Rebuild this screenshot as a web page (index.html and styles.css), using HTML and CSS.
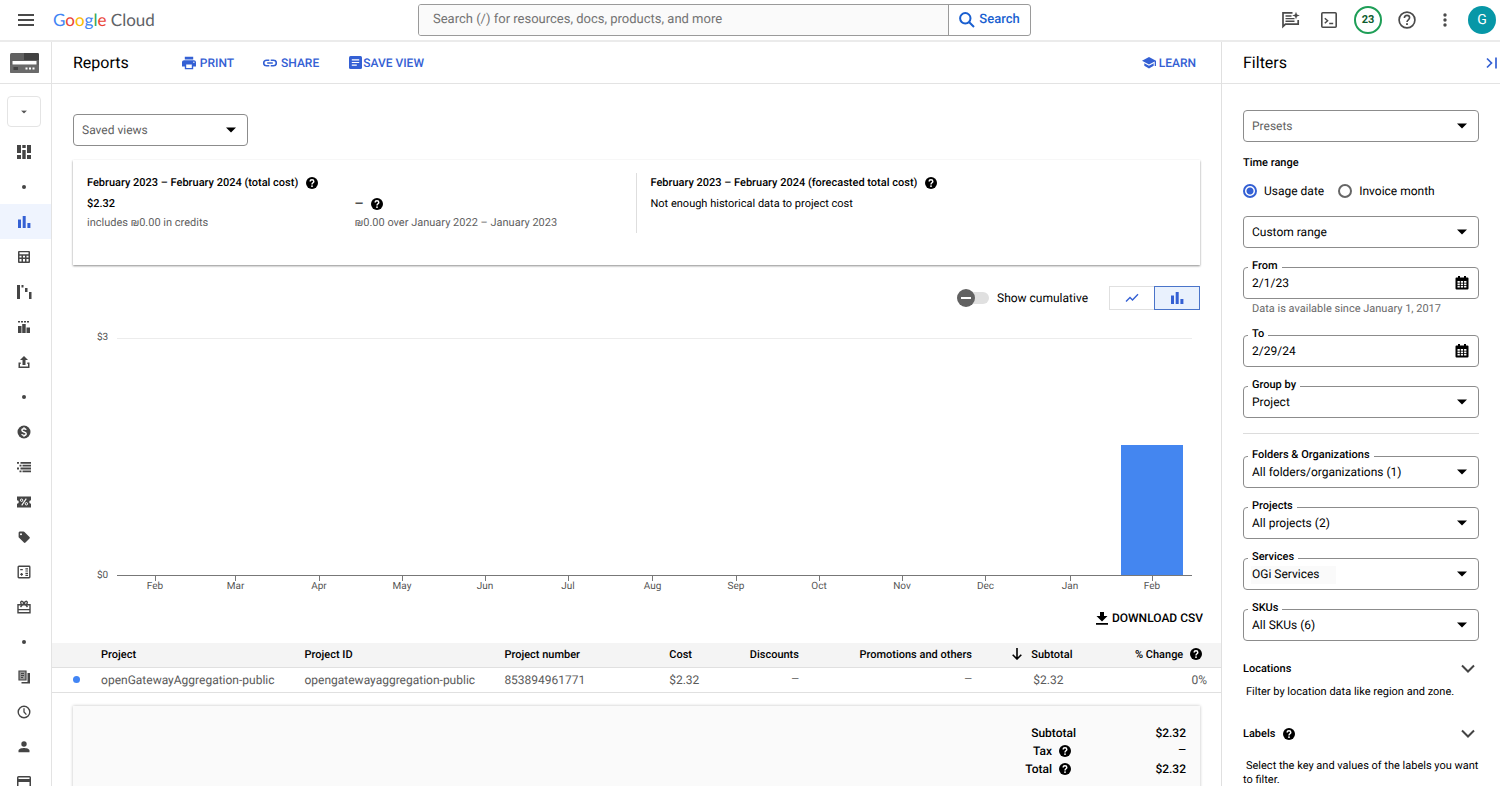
FILE: index.html
```html
<!DOCTYPE html>
<html lang="en">
<head>
<meta charset="utf-8">
<meta name="viewport" content="width=device-width, initial-scale=1">
<title>Reports – Google Cloud</title>
<link rel="stylesheet" href="styles.css">
</head>
<body>
<svg class="sprite" aria-hidden="true">
  <symbol id="i-help" viewBox="2 2 20 20"><circle cx="12" cy="12" r="10"/><path class="knock" stroke-width="2.4" d="M9 9.5c0-1.9 1.3-2.9 3-2.9s3 1.100 3 2.700c0 2.200-3 2.300-3 5"/><rect class="knock-fill" x="10.700" y="16" width="2.600" height="2.600"/></symbol>
  <symbol id="i-caret" viewBox="0 0 10 6"><path d="M0 .5h10l-5 5z"/></symbol>
  <symbol id="i-chevron" viewBox="0 0 14 10"><path class="line" stroke-width="2" d="M1 1.500l6 6 6-6"/></symbol>
  <symbol id="i-bars" viewBox="0 0 14 14"><path d="M1 4.500h3V13H1zM5.700 1h3v12h-3zM10.400 8h3v5h-3z"/></symbol>
  <symbol id="i-calendar" viewBox="0 0 14 14"><path d="M3 0h2v1.500h4V0h2v1.500h1.500a1 1 0 0 1 1 1V12.500a1 1 0 0 1-1 1h-11a1 1 0 0 1-1-1v-10a1 1 0 0 1 1-1H3z"/><path class="knock-fill" d="M2.500 5h2.300v1.700H2.500zM5.800 5h2.300v1.700H5.800zM9.100 5h2.300v1.700H9.100zM2.500 7.500h2.300v1.700H2.500zM5.800 7.500h2.300v1.700H5.800zM9.100 7.500h2.300v1.700H9.100zM2.500 10h2.300v1.400H2.500zM5.800 10h2.300v1.400H5.800zM9.100 10h2.300v1.400H9.100z"/></symbol>
</svg>

<header class="topbar">
  <div class="brand">
    <button class="icon-btn" aria-label="Main menu"><svg width="16" height="12" viewBox="0 0 16 12"><path d="M0 0h16v2H0zM0 5h16v2H0zM0 10h16v2H0z"/></svg></button>
    <a class="logo" href="#" aria-label="Google Cloud"><span class="g-blue">G</span><span class="g-red">o</span><span class="g-yellow">o</span><span class="g-blue">g</span><span class="g-green">l</span><span class="g-red">e</span> <span class="cloud">Cloud</span></a>
  </div>
  <form class="search">
    <input class="search-input" type="search" aria-label="Search" placeholder="Search (/) for resources, docs, products, and more">
    <button class="search-btn" type="button"><svg width="16" height="16" viewBox="0 0 16 16"><path class="line" stroke-width="2" d="M10.500 10.500l4.500 4.500M11.500 6.300a5.200 5.200 0 1 1-10.400 0 5.200 5.200 0 0 1 10.400 0z"/></svg>Search</button>
  </form>
  <div class="top-actions">
    <button class="icon-btn" aria-label="Gemini chat"><svg width="20" height="18" viewBox="0 0 20 18"><path class="line" stroke-width="1.700" d="M11.500 1.900H2V15.500L4.500 13.200H17.200V9"/><path class="line" stroke-width="1.400" d="M4.500 5h6M4.500 7.600h9M4.500 10.200h9"/><path d="M15 .8l1 2.700 2.800 1-2.800 1-1 2.800-1-2.800-2.800-1 2.800-1z"/></svg></button>
    <button class="icon-btn" aria-label="Cloud Shell"><svg width="16" height="16" viewBox="0 0 16 16"><rect class="line" stroke-width="1.600" x=".8" y=".8" width="14.400" height="14.400" rx="1"/><path class="line" stroke-width="1.500" d="M3.800 6.200l2.800 2.500-2.800 2.500M8.200 11.400h4"/></svg></button>
    <button class="count" aria-label="23 notifications">23</button>
    <button class="icon-btn" aria-label="Help"><svg width="18" height="18" viewBox="0 0 18 18"><circle class="line" stroke-width="1.700" cx="9" cy="9" r="7.900"/><path class="line" stroke-width="1.600" d="M6.400 7.100c0-1.700 1.200-2.700 2.600-2.700s2.600 1 2.600 2.400c0 1.900-2.600 2.100-2.600 4.200"/><rect x="8.100" y="12.200" width="1.800" height="1.800"/></svg></button>
    <button class="icon-btn more" aria-label="More options"><svg width="4" height="14" viewBox="0 0 4 14"><circle cx="2" cy="2" r="1.700"/><circle cx="2" cy="7" r="1.700"/><circle cx="2" cy="12" r="1.700"/></svg></button>
    <button class="avatar" aria-label="Account">G</button>
  </div>
</header>

<div class="shell">
  <nav class="rail" aria-label="Billing">
    <div class="rail-head"><svg width="29" height="20" viewBox="0 0 29 20"><rect fill="#616161" width="29" height="20" rx="1.500"/><path fill="#424242" d="M14 0h13.500A1.500 1.500 0 0 1 29 1.500V7H14z"/><path fill="#6a6a6a" d="M0 12h29v6.500a1.500 1.500 0 0 1-1.500 1.500h-26A1.500 1.500 0 0 1 0 18.500z"/><path fill="#fff" d="M2.500 8h24v3.500h-24z"/><path fill="#424242" d="M3.500 14h4.500v3H3.500z"/><path fill="#fff" d="M15.500 14.500h2v2h-2zM19 14.500h2v2h-2zM22.500 14.500h2v2h-2z"/></svg></div>
    <button class="rail-picker" aria-label="Billing account"><svg width="6" height="4" viewBox="0 0 10 6"><use href="#i-caret"/></svg></button>
    <ul class="rail-list">
      <li><a href="#" aria-label="Overview"><svg width="14" height="14" viewBox="0 0 14 14"><path d="M0 0h4v8H0zM0 10h4v4H0zM5.300 0h3.400v3H5.300zM5.300 5h3.400v9H5.300zM10 0h4v8h-4zM10 10h4v4h-4z"/></svg></a></li>
      <li class="rail-dot"></li>
      <li><a class="active" href="#" aria-label="Reports"><svg width="14" height="14"><use href="#i-bars"/></svg></a></li>
      <li><a href="#" aria-label="Cost table"><svg width="14" height="14" viewBox="0 0 14 14"><path fill-rule="evenodd" d="M2 1h10a1 1 0 0 1 1 1v10a1 1 0 0 1-1 1H2a1 1 0 0 1-1-1V2a1 1 0 0 1 1-1zM2.500 2.300v2h9v-2zM2.500 5.700v1.800h2V5.700zM6 5.700v1.800h2V5.700zM9.500 5.700v1.800h2V5.700zM2.500 9v2.500h2V9zM6 9v2.500h2V9zM9.500 9v2.500h2V9z"/></svg></a></li>
      <li><a href="#" aria-label="Cost breakdown"><svg width="16" height="14" viewBox="0 0 16 14"><path d="M1 0h3v14H1zM5.500 0h2v2.500h-2zM9 3h2.500v4H9zM13 7h2.500v7H13z"/></svg></a></li>
      <li><a href="#" aria-label="Commitments"><svg width="14" height="14" viewBox="0 0 14 14"><path d="M1 1h2v1.500H1zM4 1h2v1.500H4zM7 1h2v1.500H7zM10 1h2v1.500h-2zM1 6h3.500v7H1zM5.200 4h3.500v9H5.200zM9.500 7.500H13V13H9.500z"/></svg></a></li>
      <li><a href="#" aria-label="Billing export"><svg width="14" height="14" viewBox="0 0 14 14"><path d="M7 1l4 4H8.500v5h-3V5H3zM1.500 7.500h2.200V9H3v2.500h8V9h-.7V7.500h2.200V13h-11z"/></svg></a></li>
      <li class="rail-dot"></li>
      <li><a href="#" aria-label="Anomalies"><svg width="14" height="14" viewBox="0 0 14 14"><circle cx="7" cy="7" r="6.500"/><path class="knock" stroke-width="1.400" d="M9.200 4.800C8.800 4 8 3.700 7 3.700c-1.200 0-2.100.6-2.100 1.600C4.900 7.700 9.200 6.400 9.200 8.800c0 1-.9 1.600-2.200 1.600-1.100 0-2-.4-2.300-1.300M7 2.300v1.400M7 10.400v1.300"/></svg></a></li>
      <li><a href="#" aria-label="Budgets"><svg width="14" height="12" viewBox="0 0 14 12"><path d="M0 1h2v1.800H0zM3.500 1H14v1.800H3.500zM2.500 3.800h2v1.800h-2zM5.500 3.800H14v1.800H5.500zM0 6.600h2v1.800H0zM3.500 6.600H14v1.800H3.500zM2.500 9.400h2v1.800h-2zM5.500 9.400H14v1.800H5.500z"/></svg></a></li>
      <li><a href="#" aria-label="Credits"><svg width="14" height="12" viewBox="0 0 14 12"><path d="M0 .5h14v3.700a1.800 1.800 0 0 0 0 3.600v3.700H0V7.800a1.800 1.800 0 0 0 0-3.600z"/><path class="knock" stroke-width="1.100" d="M9.300 2.600L4.700 9.400"/><circle class="knock" stroke-width="1" cx="4.600" cy="4.200" r="1.200"/><circle class="knock" stroke-width="1" cx="9.400" cy="7.800" r="1.200"/></svg></a></li>
      <li><a href="#" aria-label="Pricing"><svg width="14" height="14" viewBox="0 0 14 14"><path fill-rule="evenodd" d="M2.500 1.500h4l1 .4 5 5q.8.800 0 1.600l-4 4q-.8.800-1.600 0L1.600 7.200V2.500zM4 3.200a1 1 0 1 0 0 2 1 1 0 0 0 0-2z"/></svg></a></li>
      <li><a href="#" aria-label="Cost estimation"><svg width="14" height="14" viewBox="0 0 14 14"><rect class="line" stroke-width="1.400" x="1.200" y="1.200" width="11.600" height="11.600" rx=".7"/><path class="line" stroke-width="1.200" d="M3.200 4.600h2.600M8.400 3.900h2.600M8.400 6h2.600M3.200 9.400h2.800M4.600 8v2.800M8.400 8.400h2.600M8.400 10.400h2.600"/></svg></a></li>
      <li><a href="#" aria-label="Rewards"><svg width="14" height="14" viewBox="0 0 14 14"><path class="line" stroke-width="1.400" d="M1 4.700h12v8H1zM1 9.600h12M3.500 7l3.500-4 3.500 4M7 3.800C6.500 1 3.700.5 3.700 2.500c0 1.300.8 2 1.500 2.100M7 3.800c.5-2.800 3.300-3.300 3.300-1.300 0 1.300-.8 2-1.500 2.100"/></svg></a></li>
      <li class="rail-dot"></li>
      <li><a href="#" aria-label="Documents"><svg width="14" height="14" viewBox="0 0 14 14"><path fill="#9a9a9a" d="M2 1h7v9H2z"/><path class="line" stroke-width="1.200" d="M2 1h7v9H2zM4 3.500h3M4 5.500h3M4 7.500h2"/><path d="M10.500 3H13v10.500H4.500V12h6z"/></svg></a></li>
      <li><a href="#" aria-label="Transactions"><svg width="14" height="14" viewBox="0 0 14 14"><circle class="line" stroke-width="1.400" cx="7" cy="7" r="5.800"/><path class="line" stroke-width="1.300" d="M7 3.300V7l2.400 2.600"/></svg></a></li>
      <li><a href="#" aria-label="Account management"><svg width="14" height="14" viewBox="0 0 14 14"><circle cx="7" cy="4" r="2.700"/><path d="M1.500 12.300v-1.500C1.500 8.700 5 8 7 8s5.500.7 5.500 2.800v1.500z"/></svg></a></li>
      <li><a href="#" aria-label="Payment method"><svg width="14" height="12" viewBox="0 0 14 12"><path fill-rule="evenodd" d="M1.500 0h11Q14 0 14 1.500v9q0 1.500-1.500 1.500h-11Q0 12 0 10.500v-9Q0 0 1.500 0zM1.500 1.500V3h11V1.500zM1.500 6v4.500h11V6z"/></svg></a></li>
    </ul>
  </nav>

  <main class="main">
    <div class="toolbar">
      <h1 class="title">Reports</h1>
      <button class="tool tool-print"><svg width="14" height="14" viewBox="2 2 20 20"><path d="M19 8H5c-1.660 0-3 1.340-3 3v6h4v4h12v-4h4v-6c0-1.660-1.340-3-3-3zm-3 11H8v-5h8v5zm3-7c-.55 0-1-.45-1-1s.45-1 1-1 1 .45 1 1-.45 1-1 1zm-1-9H6v4h12V3z"/></svg>PRINT</button>
      <button class="tool tool-share"><svg width="14" height="8" viewBox="2 6.500 20 11"><path class="line" stroke-width="2.300" d="M11 8H7a4 4 0 0 0 0 8h4M13 8h4a4 4 0 0 1 0 8h-4M8 12h8"/></svg>SHARE</button>
      <button class="tool tool-save"><svg width="13" height="13" viewBox="0 0 13 13"><rect width="13" height="13" rx="1.500"/><path class="knock" stroke-width="1.200" d="M2.800 3.800h7.400M2.800 6.500h7.400M2.800 9.200h5"/></svg>SAVE VIEW</button>
      <button class="tool tool-learn"><svg width="14" height="12" viewBox="0 0 14 12"><path d="M7 0l7 3.700V9h-1.300V4.500L7 7.500 0 3.700zM2.300 6.200L7 8.800l4.700-2.600v2.600L7 11.500 2.300 8.800z"/></svg>LEARN</button>
    </div>

    <div class="content">
      <div class="field saved-views">
        <select class="control muted" aria-label="Saved views"><option>Saved views</option></select>
        <svg class="field-icon" width="10" height="6"><use href="#i-caret"/></svg>
      </div>

      <section class="summary">
        <div class="summary-cost">
          <h2 class="summary-title">February 2023 – February 2024 (total cost) <svg width="12" height="12"><use href="#i-help"/></svg></h2>
          <div class="summary-cols">
            <div><p class="summary-value">$2.32</p><p class="summary-note">includes ₪0.00 in credits</p></div>
            <div><p class="summary-value">— <svg width="12" height="12"><use href="#i-help"/></svg></p><p class="summary-note">₪0.00 over January 2022 – January 2023</p></div>
          </div>
        </div>
        <div class="summary-forecast">
          <h2 class="summary-title">February 2023 – February 2024 (forecasted total cost) <svg width="12" height="12"><use href="#i-help"/></svg></h2>
          <p class="summary-text">Not enough historical data to project cost</p>
        </div>
      </section>

      <div class="chart-controls">
        <label class="switch"><input class="switch-input" type="checkbox" role="switch">Show cumulative</label>
        <div class="chart-type">
          <button class="type-btn" aria-label="Line chart"><svg width="14" height="10" viewBox="0 0 14 10"><path class="line" stroke-width="1.400" d="M1 8.500l4-4 2.500 2.500L13 1.200"/></svg></button>
          <button class="type-btn selected" aria-label="Bar chart"><svg width="14" height="14"><use href="#i-bars"/></svg></button>
        </div>
      </div>

      <div class="chart" role="img" aria-label="Cost by month">
        <div class="y-axis"><span>$3</span><span>$0</span></div>
        <div class="plot">
          <div class="month"><div class="slot"></div><span>Feb</span></div>
          <div class="month"><div class="slot"></div><span>Mar</span></div>
          <div class="month"><div class="slot"></div><span>Apr</span></div>
          <div class="month"><div class="slot"></div><span>May</span></div>
          <div class="month"><div class="slot"></div><span>Jun</span></div>
          <div class="month"><div class="slot"></div><span>Jul</span></div>
          <div class="month"><div class="slot"></div><span>Aug</span></div>
          <div class="month"><div class="slot"></div><span>Sep</span></div>
          <div class="month"><div class="slot"></div><span>Oct</span></div>
          <div class="month"><div class="slot"></div><span>Nov</span></div>
          <div class="month"><div class="slot"></div><span>Dec</span></div>
          <div class="month"><div class="slot"></div><span>Jan</span></div>
          <div class="month"><div class="slot"><div class="bar" style="height:55%"></div></div><span>Feb</span></div>
        </div>
      </div>
    </div>

    <div class="download-row"><button class="download"><svg width="12" height="13" viewBox="0 0 12 13"><path d="M4 0h4v4h3.500L6 9.500.5 4H4zM0 11h12v1.800H0z"/></svg>DOWNLOAD CSV</button></div>

    <table class="costs">
      <colgroup><col class="c-dot"><col class="c-project"><col class="c-id"><col class="c-number"><col class="c-cost"><col class="c-discount"><col class="c-promo"><col class="c-subtotal"><col class="c-change"></colgroup>
      <thead><tr><td></td><th>Project</th><th>Project ID</th><th>Project number</th><th>Cost</th><th class="num">Discounts</th><th class="num">Promotions and others</th><th class="num"><svg class="sort" width="10" height="12" viewBox="0 0 10 12"><path class="line" stroke-width="1.600" d="M5 0v11M.7 6.700L5 11l4.300-4.300"/></svg>Subtotal</th><th class="num change">% Change <svg width="12" height="12"><use href="#i-help"/></svg></th></tr></thead>
      <tbody><tr><td class="dot-cell"><span class="dot"></span></td><td>openGatewayAggregation-public</td><td>opengatewayaggregation-public</td><td>853894961771</td><td>$2.32</td><td class="num dash">—</td><td class="num dash">—</td><td class="num sub">$2.32</td><td class="num change">0%</td></tr></tbody>
    </table>

    <dl class="totals">
      <dt class="plain">Subtotal</dt><dd>$2.32</dd>
      <dt>Tax <svg width="12" height="12"><use href="#i-help"/></svg></dt><dd class="dash">—</dd>
      <dt>Total <svg width="12" height="12"><use href="#i-help"/></svg></dt><dd>$2.32</dd>
    </dl>
  </main>

  <aside class="filters">
    <div class="filters-head"><h2 class="title">Filters</h2><button class="collapse" aria-label="Hide filters"><svg width="11" height="12" viewBox="0 0 11 12"><path class="line" stroke-width="1.700" d="M1 1.500L5.500 6 1 10.500M10 .5v11"/></svg></button></div>
    <div class="filters-body">
      <div class="field"><select class="control muted" aria-label="Presets"><option>Presets</option></select><svg class="field-icon" width="10" height="6"><use href="#i-caret"/></svg></div>
      <fieldset class="range">
        <legend class="heading">Time range</legend>
        <div class="radios">
          <label class="radio"><input type="radio" name="range" checked>Usage date</label>
          <label class="radio"><input type="radio" name="range">Invoice month</label>
        </div>
      </fieldset>
      <div class="field"><select class="control" aria-label="Range"><option>Custom range</option></select><svg class="field-icon" width="10" height="6"><use href="#i-caret"/></svg></div>
      <div class="field"><label class="field-label" for="from">From</label><input class="control" id="from" type="text" value="2/1/23"><svg class="field-icon" width="14" height="14"><use href="#i-calendar"/></svg></div>
      <p class="hint">Data is available since January 1, 2017</p>
      <div class="field"><label class="field-label" for="to">To</label><input class="control" id="to" type="text" value="2/29/24"><svg class="field-icon" width="14" height="14"><use href="#i-calendar"/></svg></div>
      <div class="field"><label class="field-label" for="group">Group by</label><select class="control" id="group"><option>Project</option></select><svg class="field-icon" width="10" height="6"><use href="#i-caret"/></svg></div>
      <hr class="rule">
      <div class="field"><label class="field-label" for="folders">Folders &amp; Organizations</label><select class="control" id="folders"><option>All folders/organizations (1)</option></select><svg class="field-icon" width="10" height="6"><use href="#i-caret"/></svg></div>
      <div class="field"><label class="field-label" for="projects">Projects</label><select class="control" id="projects"><option>All projects (2)</option></select><svg class="field-icon" width="10" height="6"><use href="#i-caret"/></svg></div>
      <div class="field"><label class="field-label" for="services">Services</label><select class="control tinted" id="services"><option>OGi Services</option></select><svg class="field-icon" width="10" height="6"><use href="#i-caret"/></svg></div>
      <div class="field"><label class="field-label" for="skus">SKUs</label><select class="control" id="skus"><option>All SKUs (6)</option></select><svg class="field-icon" width="10" height="6"><use href="#i-caret"/></svg></div>
      <section class="group">
        <button class="group-head"><span>Locations</span><svg class="chev" width="14" height="10"><use href="#i-chevron"/></svg></button>
        <p class="group-text">Filter by location data like region and zone.</p>
      </section>
      <section class="group labels">
        <button class="group-head"><span>Labels</span><svg width="12" height="12"><use href="#i-help"/></svg><svg class="chev" width="14" height="10"><use href="#i-chevron"/></svg></button>
        <p class="group-text">Select the key and values of the labels you want to filter.</p>
      </section>
    </div>
  </aside>
</div>
</body>
</html>
```

FILE: styles.css
```css
* { box-sizing: border-box; }
body {
  margin: 0;
  height: 100vh;
  display: flex;
  flex-direction: column;
  overflow: hidden;
  background: #fff;
  color: #000;
  font: 12px/16px Roboto, "Liberation Sans", sans-serif;
  text-rendering: geometricPrecision;
}
h1, h2, p, ul, dl, dd, fieldset { margin: 0; padding: 0; }
button, input, select { font: inherit; color: inherit; text-rendering: inherit; }
button { border: 0; padding: 0; background: none; cursor: pointer; }
svg { fill: currentColor; flex: none; }
.sprite { position: absolute; width: 0; height: 0; }
.line { fill: none; stroke: currentColor; }
.knock { fill: none; stroke: #fff; }
.knock-fill { fill: #fff; }

/* Top bar */
.topbar {
  display: grid;
  grid-template-columns: 418fr 613fr 469fr;
  align-items: center;
  flex: none;
  height: 42px;
  padding-bottom: 1px;
  border-bottom: 2px solid #ebebeb;
}
.brand { display: flex; align-items: center; gap: 19px; padding-left: 18px; }
.icon-btn { display: flex; color: #4a4a4a; }
.logo { font: 17px/22px Lato, sans-serif; text-decoration: none; color: #5f6368; }
.g-blue { color: #4285f4; }
.g-red { color: #ea4335; }
.g-yellow { color: #fbbc04; }
.g-green { color: #34a853; }
.search { display: flex; height: 32px; border: 1px solid #9a9a9a; border-radius: 3px; overflow: hidden; }
.search-input {
  flex: 1;
  min-width: 0;
  padding: 0 14px;
  border: 0;
  border-right: 1px solid #9a9a9a;
  background: #fafafa;
  font-size: 13px;
}
.search-input::placeholder { color: #737373; }
.search-btn {
  display: flex;
  align-items: center;
  justify-content: center;
  gap: 4px;
  width: 81px;
  color: #1a5fd0;
  font-size: 13px;
  font-weight: 500;
}
.top-actions { display: flex; align-items: center; justify-content: flex-end; padding-right: 4px; }
.top-actions > * { margin-left: 20px; }
.count {
  width: 28px;
  height: 28px;
  border: 2px solid #1e9e57;
  border-radius: 50%;
  color: #0d5c2e;
  font-size: 11px;
  font-weight: 700;
}
.top-actions > .count { margin-left: 17px; margin-right: -4px; }
.top-actions > .more { margin-left: 27px; }
.avatar { width: 28px; height: 28px; border-radius: 50%; background: #0797a7; color: #fff; font-size: 14px; }
.top-actions > .avatar { margin-left: 21px; }

/* Page shell */
.shell { flex: 1; min-height: 0; display: grid; grid-template-columns: 52px minmax(0, 1fr) 279px; }
.rail { border-right: 1px solid #e3e3e3; overflow: hidden; color: #454545; }
.rail-head { display: grid; place-items: center; height: 42px; padding-right: 3px; border-bottom: 1px solid #e3e3e3; }
.rail-picker { display: grid; place-items: center; width: 34px; height: 31px; margin: 12px 7px 7px; border: 1px solid #e4e4e4; border-radius: 4px; color: #555; }
.rail-list { list-style: none; }
.rail-list li { height: 35px; }
.rail-list a { display: grid; place-items: center; height: 35px; padding-right: 3px; color: inherit; }
.rail-list .active { background: #eff4fe; color: #3460d4; }
.rail-list .rail-dot { display: grid; place-items: center; padding-right: 3px; }
.rail-dot::before { content: ""; width: 4px; height: 4px; border-radius: 50%; background: #454545; }

.main { overflow: auto; scrollbar-width: none; }
.toolbar { display: flex; align-items: center; height: 42px; padding: 0 25px 0 21px; border-bottom: 1px solid #e3e3e3; }
.title { font-size: 16px; font-weight: 400; line-height: 20px; }
.tool { display: flex; align-items: center; gap: 4px; color: #3460d4; font-weight: 500; }
.tool-print { margin-left: 53px; }
.tool-share { margin-left: 29px; }
.tool-save { margin-left: 30px; gap: 1px; }
.tool-learn { margin-left: auto; gap: 3px; }
.content { padding: 30px 21px 0; }

/* Form fields */
.field { position: relative; display: grid; align-items: center; margin-bottom: 19px; }
.field > .control, .field > .field-icon { grid-area: 1 / 1; }
.control {
  width: 100%;
  height: 32px;
  padding: 0 32px 0 8px;
  border: 1px solid #8c8c8c;
  border-radius: 4px;
  background: #fff;
  appearance: none;
}
.muted { color: #5f5f5f; }
.tinted { background: linear-gradient(#fafafa, #fafafa) 7px 7px / 85px 18px no-repeat; }
.field-icon { justify-self: end; margin-right: 10px; pointer-events: none; }
.field-icon[width="10"] { margin-right: 12px; }
.field-label {
  position: absolute;
  top: -8px;
  left: 5px;
  padding: 0 4px;
  background: #fff;
  font-size: 11px;
  font-weight: 500;
  line-height: 14px;
}
.saved-views { width: 175px; margin-bottom: 14px; }

/* Summary card */
.summary { display: grid; grid-template-columns: 1fr 1fr; min-height: 105px; padding: 13px 14px; box-shadow: 0 1px 2px rgba(0, 0, 0, .45); }
.summary-cost { height: 60px; border-right: 1px solid #dedede; }
.summary-forecast { padding-left: 14px; }
.summary-title { display: flex; align-items: center; gap: 8px; font-size: 11px; line-height: 20px; font-weight: 500; }
.summary-cols { display: grid; grid-template-columns: 268fr 281fr; }
.summary-value { display: flex; align-items: center; gap: 8px; font-size: 11px; line-height: 22px; font-weight: 500; }
.summary-text { font-size: 11px; line-height: 22px; }
.summary-note { font-size: 11px; line-height: 16px; color: #5f5f5f; }

/* Chart */
.chart-controls { display: flex; justify-content: flex-end; align-items: center; gap: 21px; margin-top: 21px; }
.switch { display: flex; align-items: center; gap: 8px; }
.switch-input { position: relative; appearance: none; width: 31px; height: 12px; margin: 0; border-radius: 6px; background: #e0e0e0; }
.switch-input::before { content: ""; position: absolute; left: -1px; top: -3px; width: 18px; height: 18px; border-radius: 50%; background: #616161; }
.switch-input::after { content: ""; position: absolute; left: 3px; top: 5px; width: 10px; height: 2px; background: #fff; }
.chart-type { display: grid; grid-template-columns: 45px 46px; }
.type-btn { display: grid; place-items: center; height: 24px; border: 1px solid #e0e0e0; border-right: 0; color: #3460d4; }
.type-btn.selected { border: 1px solid #4a74c9; background: #e9f1fd; }
.chart { display: flex; margin: 28px 8px 0 24px; color: #555; font-size: 10px; line-height: 12px; }
.y-axis { display: flex; flex-direction: column; justify-content: space-between; width: 20px; height: 250px; margin-top: -6px; }
.plot {
  flex: 1;
  display: grid;
  grid-template-columns: 76fr 85fr 82fr 84fr 82fr 84fr 85fr 82fr 84fr 82fr 85fr 84fr 80fr;
  border-top: 1px solid #ececec;
}
.month { display: flex; flex-direction: column; align-items: center; }
.slot { display: flex; align-items: flex-end; justify-content: center; width: 100%; height: 237px; border-bottom: 1px solid #777; }
.month::after { content: ""; order: 1; width: 1px; height: 5px; background: #777; }
.month span { order: 2; }
.bar { width: 78%; background: #4486f0; }

/* Cost table */
.download-row { display: flex; justify-content: flex-end; margin-top: 16px; padding-right: 18px; }
.download { display: flex; align-items: center; gap: 4px; font-weight: 500; line-height: 18px; }
.costs { width: 100%; margin-top: 16px; border-collapse: collapse; table-layout: fixed; }
.costs th, .costs td { height: 25px; padding: 0; border-bottom: 1px solid #e0e0e0; text-align: left; white-space: nowrap; }
.costs thead { background: #f4f4f4; }
.costs thead th, .costs thead td { height: 24px; }
.costs th { font-size: 11px; font-weight: 500; }
.costs td { color: #5a5a5a; }
.costs .num { text-align: right; }
.costs .sub { padding-right: 9px; }
.costs td.dash, .totals .dash { font-size: 10px; }
.costs th.change { padding-right: 19px; }
.costs td.change { padding-right: 14px; }
.costs svg { vertical-align: -2px; margin-left: 4px; }
.costs .sort { margin-right: 9px; }
.c-dot { width: 4.2%; }
.c-project { width: 17.4%; }
.c-id { width: 17.1%; }
.c-number { width: 14.1%; }
.c-cost { width: 4.3%; }
.c-discount { width: 6.8%; }
.c-promo { width: 14.8%; }
.c-subtotal { width: 8.6%; }
.c-change { width: 12.7%; }
.dot { display: block; width: 7px; height: 7px; margin-left: 21px; border-radius: 50%; background: #4285f4; }

.totals {
  display: grid;
  grid-template-columns: 1fr 110px;
  grid-auto-rows: 18px;
  align-content: start;
  min-height: 140px;
  margin: 13px 21px 0;
  padding: 18px 14px;
  background: #fafafa;
  box-shadow: 0 0 3px rgba(0, 0, 0, .25);
  font-weight: 500;
  line-height: 18px;
  text-align: right;
}
.totals dt { display: flex; justify-content: flex-end; align-items: center; gap: 7px; padding-right: 5px; }
.totals .plain { padding-right: 0; }

/* Filters */
.filters { border-left: 1px solid #e0e0e0; overflow: auto; scrollbar-width: none; }
.filters-head { display: flex; align-items: center; justify-content: space-between; height: 42px; padding: 0 3px 0 21px; border-bottom: 1px solid #e3e3e3; }
.collapse { display: flex; color: #3460d4; }
.filters-body { padding: 26px 21px 0; }
.filters-body > .field:first-child { margin-bottom: 13px; }
.range { margin-bottom: 17px; border: 0; }
.range legend { padding: 0; }
.radios { display: flex; gap: 14px; padding-top: 12px; }
.heading { font-size: 11px; font-weight: 500; line-height: 16px; }
.radio { display: flex; align-items: center; gap: 7px; white-space: nowrap; }
.radio input { appearance: none; width: 14px; height: 14px; margin: 0; border: 2px solid #666; border-radius: 50%; }
.radio input:checked { border-color: #3460d4; background: radial-gradient(circle, #3460d4 3px, #fff 4px); }
.hint { margin: -17px 0 18px 9px; font-size: 11px; color: #6a6a6a; }
.rule { height: 1px; margin: -4px 0 22px; border: 0; background: #dcdcdc; }
.group-head { display: flex; align-items: center; gap: 8px; width: 100%; padding-right: 4px; font-size: 11px; font-weight: 500; line-height: 18px; }
.group-head .chev { margin-left: auto; color: #444; }
.group-text { margin-top: 7px; font-size: 11px; line-height: 14px; text-indent: 3px; }
.labels { margin-top: 26px; }
.labels .group-text { margin-top: 16px; }
```
